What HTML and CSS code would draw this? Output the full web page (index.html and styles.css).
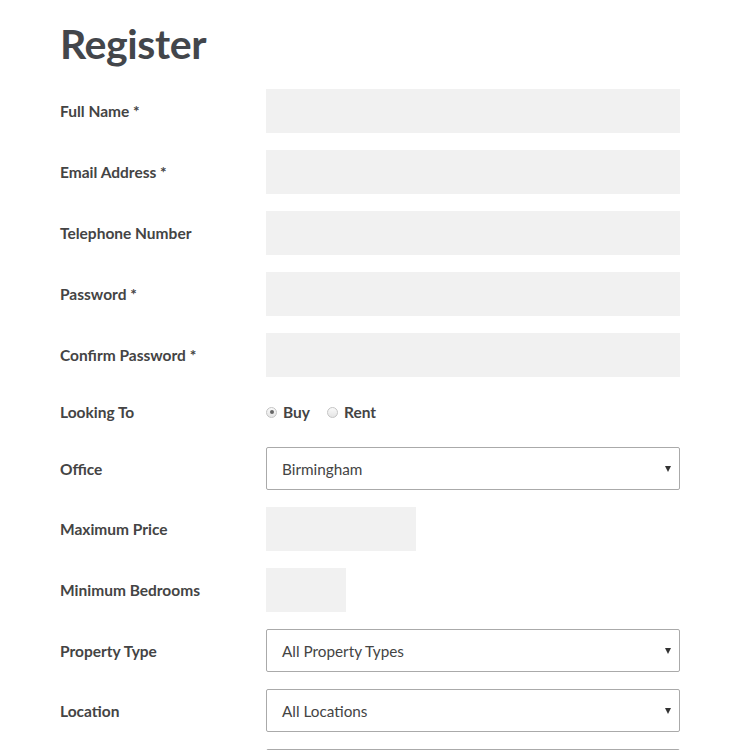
FILE: index.html
```html
<!DOCTYPE html>
<html lang="en">
<head>
<meta charset="utf-8">
<title>Register</title>
<link rel="stylesheet" href="styles.css">
</head>
<body>
<main class="page">
  <h1 class="title">Register</h1>
  <form class="form">
    <div class="row"><label class="label">Full Name *</label><div class="field"><input class="input" type="text"></div></div>
    <div class="row"><label class="label">Email Address *</label><div class="field"><input class="input" type="text"></div></div>
    <div class="row"><label class="label">Telephone Number</label><div class="field"><input class="input" type="text"></div></div>
    <div class="row"><label class="label">Password *</label><div class="field"><input class="input" type="password"></div></div>
    <div class="row"><label class="label">Confirm Password *</label><div class="field"><input class="input" type="password"></div></div>
    <div class="row row-radio"><label class="label">Looking To</label>
      <div class="field radios">
        <span class="radio"><span class="dot checked"></span>Buy</span>
        <span class="radio"><span class="dot"></span>Rent</span>
      </div>
    </div>
    <div class="row row-select"><label class="label">Office</label><div class="field"><div class="select">Birmingham<span class="arrow"></span></div></div></div>
    <div class="row"><label class="label">Maximum Price</label><div class="field"><input class="input input-md" type="text"></div></div>
    <div class="row"><label class="label">Minimum Bedrooms</label><div class="field"><input class="input input-sm" type="text"></div></div>
    <div class="row row-select"><label class="label">Property Type</label><div class="field"><div class="select">All Property Types<span class="arrow"></span></div></div></div>
    <div class="row row-select"><label class="label">Location</label><div class="field"><div class="select">All Locations<span class="arrow"></span></div></div></div>
    <div class="row row-select"><label class="label">&nbsp;</label><div class="field"><div class="select"></div></div></div>
  </form>
</main>
</body>
</html>
```
FILE: styles.css
```css
html, body { margin: 0; padding: 0; background: #fff; }
body { font-family: "Lato", "Open Sans", sans-serif; color: #444; overflow: hidden; height: 750px; }
.page { padding: 0 70px 0 60px; }
.title { margin: 0; padding-top: 21px; font-size: 41px; font-weight: 700; line-height: 46px; color: #43464b; letter-spacing: -0.4px; height: 68px; }
.form { display: flex; flex-direction: column; gap: 17px; }
.row { display: flex; align-items: center; height: 44px; }
.row-select { height: 43px; }
.row-radio { height: 36px; }
.label { width: 206px; flex: none; font-size: 15.5px; font-weight: 700; color: #444; }
.field { flex: 1; }
.input { display: block; box-sizing: border-box; width: 414px; height: 44px; border: 0; background: #f1f1f1; margin: 0; }
.input-md { width: 150px; }
.input-sm { width: 80px; }
.radios { display: flex; gap: 17px; font-size: 15.5px; font-weight: 700; }
.radio { display: flex; align-items: center; gap: 6px; }
.dot { width: 11px; height: 11px; border-radius: 50%; border: 1px solid #c4c4c4; background: linear-gradient(#fafafa, #e4e4e4); box-sizing: border-box; position: relative; }
.dot.checked::after { content: ""; position: absolute; left: 2.5px; top: 2.5px; width: 4px; height: 4px; border-radius: 50%; background: #666; }
.select { box-sizing: border-box; width: 414px; height: 43px; border: 1px solid #aaa; border-radius: 2px; display: flex; align-items: center; padding-left: 15px; font-size: 15.3px; color: #444; position: relative; }
.arrow { position: absolute; right: 8px; top: 18px; width: 0; height: 0; border-left: 3px solid transparent; border-right: 3px solid transparent; border-top: 6px solid #333; }
```
